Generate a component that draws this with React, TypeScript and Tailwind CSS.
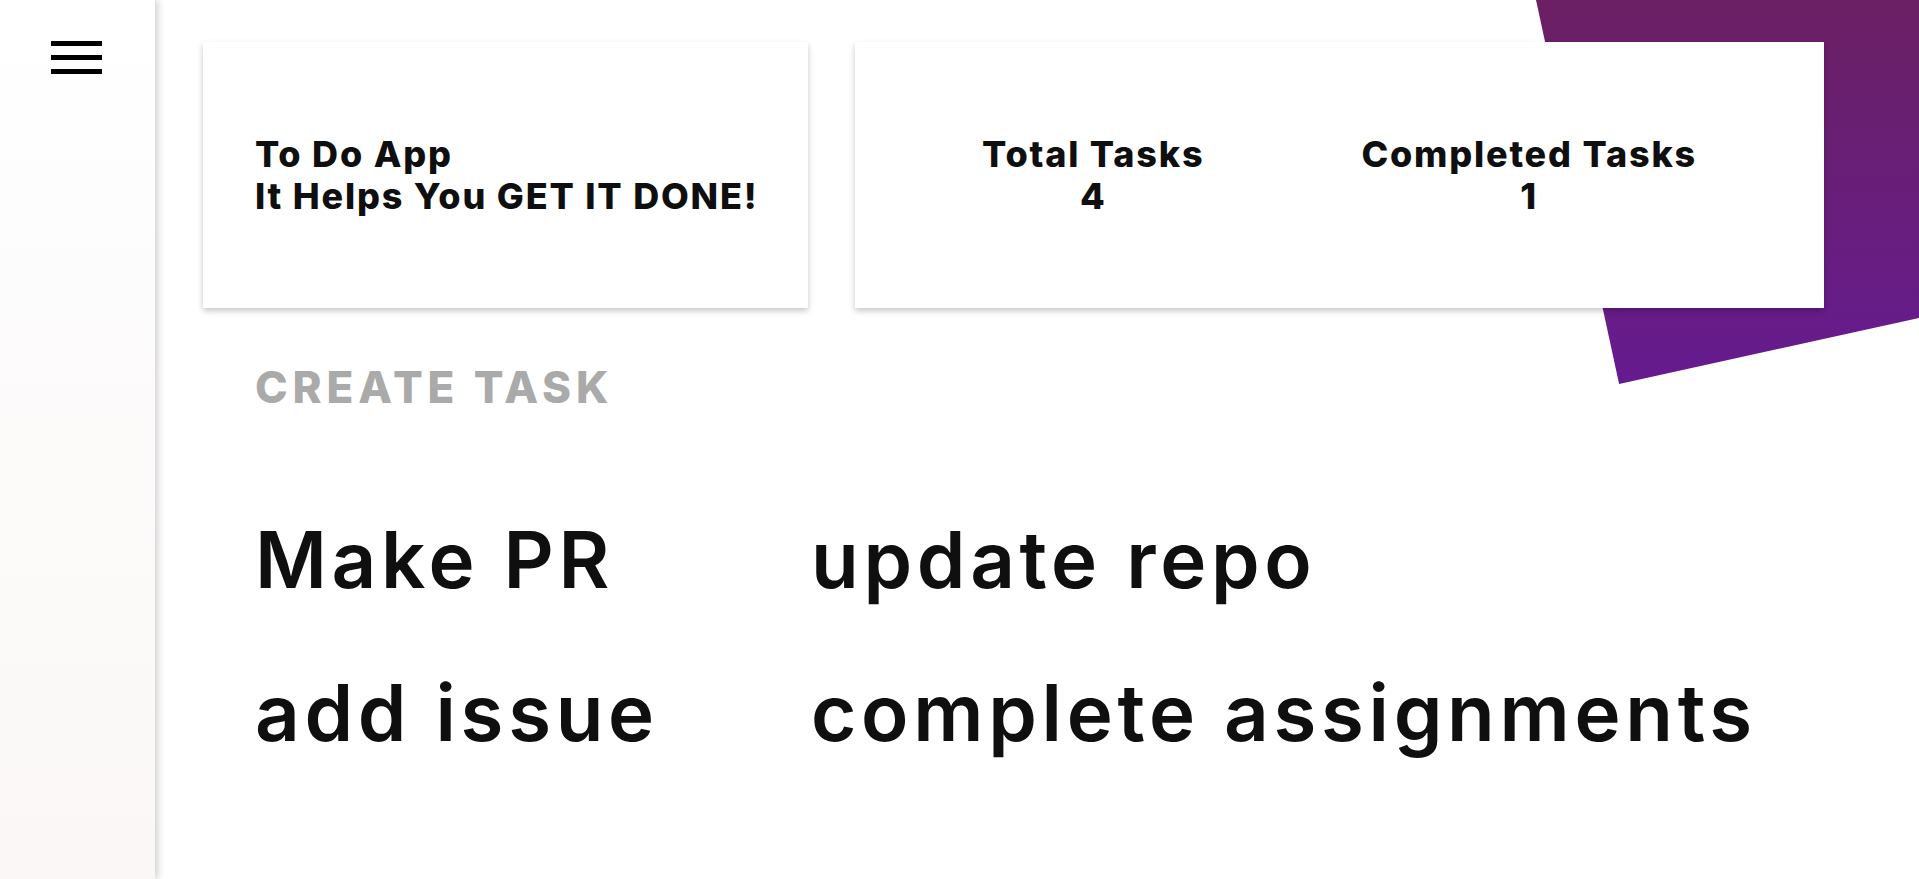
const tasks = ["Make PR", "update repo", "add issue", "complete assignments"];

export default function App() {
  return (
    <div className="flex h-[879px] w-full overflow-hidden bg-white text-[#0f0f0f] font-['Inter','Liberation_Sans',sans-serif]">
      <aside className="relative z-20 w-[155px] shrink-0 bg-linear-to-b from-white to-[#faf7f6] shadow-[3px_0_7px_rgba(0,0,0,0.18)]">
        <button className="mt-[41px] ml-[51px] flex w-[51px] flex-col gap-[9px]" aria-label="menu">
          <span className="h-[5px] w-full bg-black" />
          <span className="h-[5px] w-full bg-black" />
          <span className="h-[5px] w-full bg-black" />
        </button>
      </aside>

      <main className="relative flex-1">
        <div className="absolute right-0 top-0 h-[384px] w-[383px] bg-linear-to-b from-[#6b1f63] to-[#661a90] [clip-path:polygon(0_0,100%_0,100%_82.8%,21.7%_100%)]" />

        <div className="relative z-10 pl-[48px] pt-[42px]">
          <div className="flex gap-[47px]">
            <div className="flex h-[266px] w-[605px] flex-col justify-center bg-white pl-[52px] text-[36px] font-extrabold leading-[42px] tracking-[0.05em] shadow-[0_3px_6px_rgba(0,0,0,0.22)]">
              <p>To Do App</p>
              <p>It Helps You GET IT DONE!</p>
            </div>

            <div className="flex h-[266px] w-[969px] items-center justify-center gap-[157px] bg-white text-[36px] font-extrabold leading-[42px] tracking-[0.05em] shadow-[0_3px_6px_rgba(0,0,0,0.22)]">
              <div className="text-center">
                <p>Total Tasks</p>
                <p>4</p>
              </div>
              <div className="text-center">
                <p>Completed Tasks</p>
                <p>1</p>
              </div>
            </div>
          </div>

          <h2 className="mt-[54px] pl-[52px] text-[44px] font-extrabold leading-[50px] tracking-[0.11em] text-[#aaaaaa]">
            CREATE TASK
          </h2>

          <div className="mt-[104px] grid grid-cols-[556px_auto] gap-y-[65px] pl-[52px] text-[78px] font-semibold leading-[88px] tracking-[0.06em]">
            {tasks.map((t) => (
              <p key={t}>{t}</p>
            ))}
          </div>
        </div>
      </main>
    </div>
  );
}
